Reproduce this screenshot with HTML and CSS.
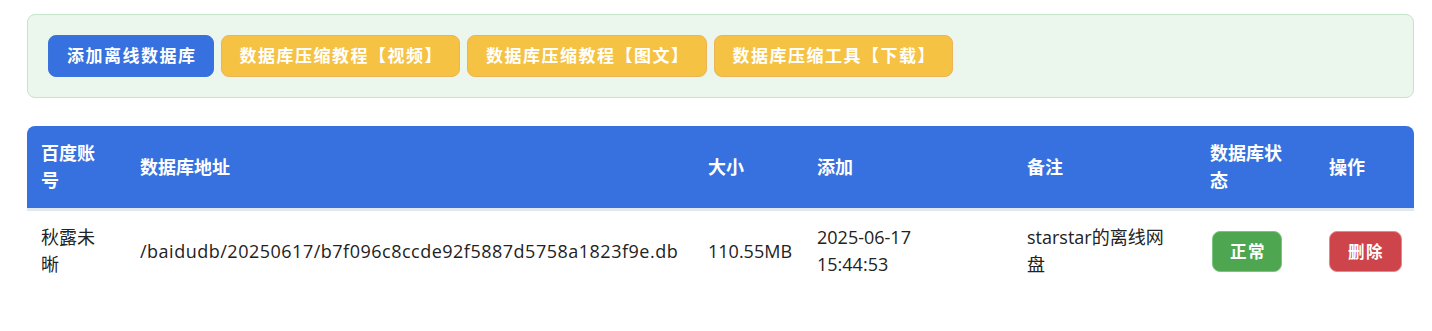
FILE: index.html
```html
<!DOCTYPE html>
<html lang="zh-CN">
<head>
    <meta charset="UTF-8">
    <meta name="viewport" content="width=device-width, initial-scale=1.0">
    <title>离线数据库</title>
    <link rel="stylesheet" href="styles.css">
</head>
<body>
    <div class="wrap">
        <!-- 상단 버튼 -->
        <div class="tool_bar">
            <a href="#" class="btn btn_blue">添加离线数据库</a>
            <a href="#" class="btn btn_yellow">数据库压缩教程【视频】</a>
            <a href="#" class="btn btn_yellow">数据库压缩教程【图文】</a>
            <a href="#" class="btn btn_yellow">数据库压缩工具【下载】</a>
        </div>

        <!-- 목록 -->
        <table class="db_tbl">
            <colgroup>
                <col style="width: 99px">
                <col style="width: 568px">
                <col style="width: 109px">
                <col style="width: 210px">
                <col style="width: 183px">
                <col style="width: 119px">
                <col>
            </colgroup>
            <thead>
                <tr>
                    <th>百度账号</th>
                    <th>数据库地址</th>
                    <th>大小</th>
                    <th>添加</th>
                    <th>备注</th>
                    <th>数据库状态</th>
                    <th>操作</th>
                </tr>
            </thead>
            <tbody>
                <tr>
                    <td>秋露未晰</td>
                    <td class="path">/baidudb/20250617/b7f096c8ccde92f5887d5758a1823f9e.db</td>
                    <td>110.55MB</td>
                    <td>2025-06-17<br>15:44:53</td>
                    <td>starstar的离线网盘</td>
                    <td><span class="tag tag_ok">正常</span></td>
                    <td><a href="#" class="tag tag_del">删除</a></td>
                </tr>
            </tbody>
        </table>
    </div>
</body>
</html>
```

FILE: styles.css
```css
/* 초기화 */
body{margin: 0; padding: 0; background: #fff;}
a{text-decoration: none;}
body, table, .btn{font-family: "Open Sans", "Noto Sans CJK SC", sans-serif;}

/* 레이아웃 */
.wrap{padding: 14px 18px 0 27px;}

.tool_bar{
    display: flex; gap: 7px;
    padding: 20px;
    background-color: #ebf6ed;
    border: 1px solid #c5e5cb;
    border-radius: 8px;
}
.btn{
    display: block;
    padding: 10px 16px 10px 18px; line-height: 20px;
    font-size: 17px; font-weight: bold; letter-spacing: 1.5px;
    color: #fff; white-space: nowrap;
    border: 1px solid transparent; border-radius: 8px;
}
.btn_blue{background-color: #3671df; border-color: #3a73dc;}
.btn_yellow{background-color: #f6c244; border-color: #eeb257;}

.db_tbl{
    width: 100%; margin-top: 28px;
    table-layout: fixed;
    border-collapse: separate; border-spacing: 0;
    font-size: 18px; color: #222;
}
.db_tbl th, .db_tbl td{
    padding: 14px 20px 14px 14px;
    line-height: 27px;
    text-align: left; vertical-align: middle;
}
.db_tbl th{
    background-color: #3671df; color: #fff; font-weight: bold;
    border-bottom: 3px solid #e2e8f0;
}
.db_tbl th:first-child{border-top-left-radius: 8px;}
.db_tbl th:last-child{border-top-right-radius: 8px;}
.db_tbl td{padding-top: 13px;}
.db_tbl td.path{letter-spacing: 0.5px; padding-right: 0;}
.db_tbl td.tag_cell{padding-left: 16px;}

.tag{
    display: inline-block;
    padding: 10px 15px 10px 17px; line-height: 19px;
    font-size: 16.5px; font-weight: bold; letter-spacing: 1.5px;
    color: #fff; white-space: nowrap;
    border: 1px solid transparent; border-radius: 8px;
    vertical-align: middle;
}
.tag_ok{background-color: #4fa650; border-color: #7cc57e; margin-left: 2px;}
.tag_del{background-color: #cd444b; border-color: #e8878b; padding: 10px 17px 10px 18px;}
```
